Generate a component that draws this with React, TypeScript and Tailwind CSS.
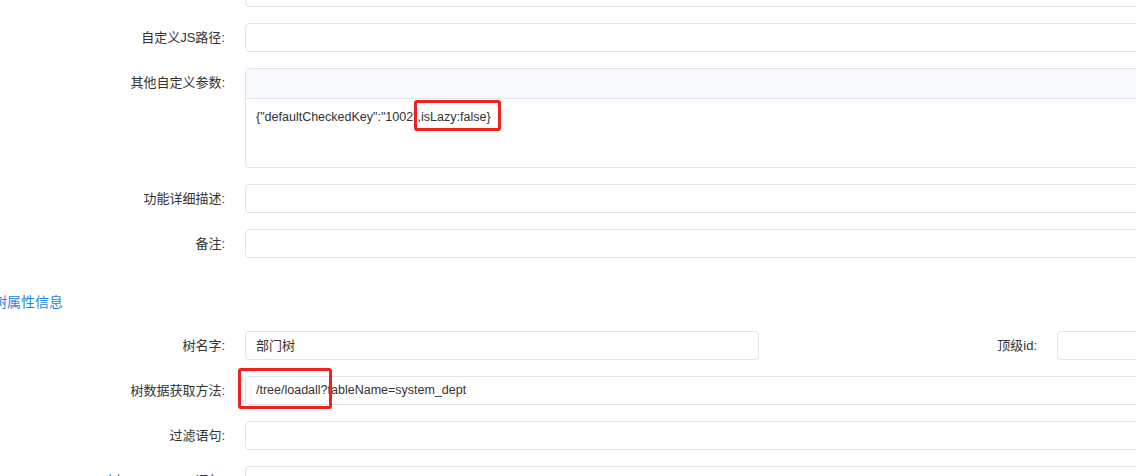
import React from "react"

const font = { fontFamily: '"Liberation Sans", "Noto Sans CJK SC", sans-serif' }

function Label({ text, className = "" }: { text: string; className?: string }) {
  return (
    <div className={"shrink-0 text-right text-[13px] text-[#333] pr-[20px] " + className}>
      {text}
    </div>
  )
}

function Input({ value = "", className = "" }: { value?: string; className?: string }) {
  return (
    <div
      className={
        "h-[29px] border border-[#e1e3ee] rounded-[4px] bg-white flex items-center px-[10px] text-[12.5px] text-[#333] whitespace-nowrap " +
        className
      }
    >
      {value}
    </div>
  )
}

function Row({ label, value, children }: { label: string; value?: string; children?: React.ReactNode }) {
  return (
    <div className="flex items-center">
      <Label text={label} className="w-[245px]" />
      <div className="relative flex-1">
        <Input value={value} />
        {children}
      </div>
    </div>
  )
}

export default function App() {
  return (
    <div className="w-[1136px] h-[476px] overflow-hidden bg-white" style={font}>
      <div className="w-[1180px] flex flex-col gap-[16px] mt-[-22px]">
        <Row label="" />
        <Row label="自定义JS路径:" />

        {/* editor with toolbar */}
        <div className="flex items-start">
          <Label text="其他自定义参数:" className="w-[245px] pt-[5px]" />
          <div className="relative flex-1 h-[100px] border border-[#e1e3ee] rounded-[4px] overflow-visible">
            <div className="h-[30px] bg-[#f8f9fd] border-b border-[#e1e3ee] rounded-t-[4px]" />
            <div className="px-[10px] pt-[9px] text-[12.5px] text-[#333]">
              {'{"defaultCheckedKey":"1002",isLazy:false}'}
            </div>
            <div className="absolute left-[168px] top-[31px] w-[87px] h-[31px] border-[3px] border-[#f0201c] rounded-[3px]" />
          </div>
        </div>

        <Row label="功能详细描述:" />
        <Row label="备注:" />

        <div className="ml-[-7px] mt-[18px] mb-[3px] text-[14px] leading-[20px] text-[#1d86ee]">树属性信息</div>

        <div className="flex items-center">
          <Label text="树名字:" className="w-[245px]" />
          <Input value="部门树" className="w-[514px] text-[13px]" />
          <Label text="顶级id:" className="w-[298px]" />
          <Input className="flex-1" />
        </div>

        <Row label="树数据获取方法:" value="/tree/loadall?tableName=system_dept">
          <div className="absolute left-[-7px] top-[-8px] w-[94px] h-[41px] border-[3px] border-[#f0201c] rounded-[3px]" />
        </Row>
        <Row label="过滤语句:" />
        <Row label="树 ORDER BY 语句:" />
      </div>
    </div>
  )
}
